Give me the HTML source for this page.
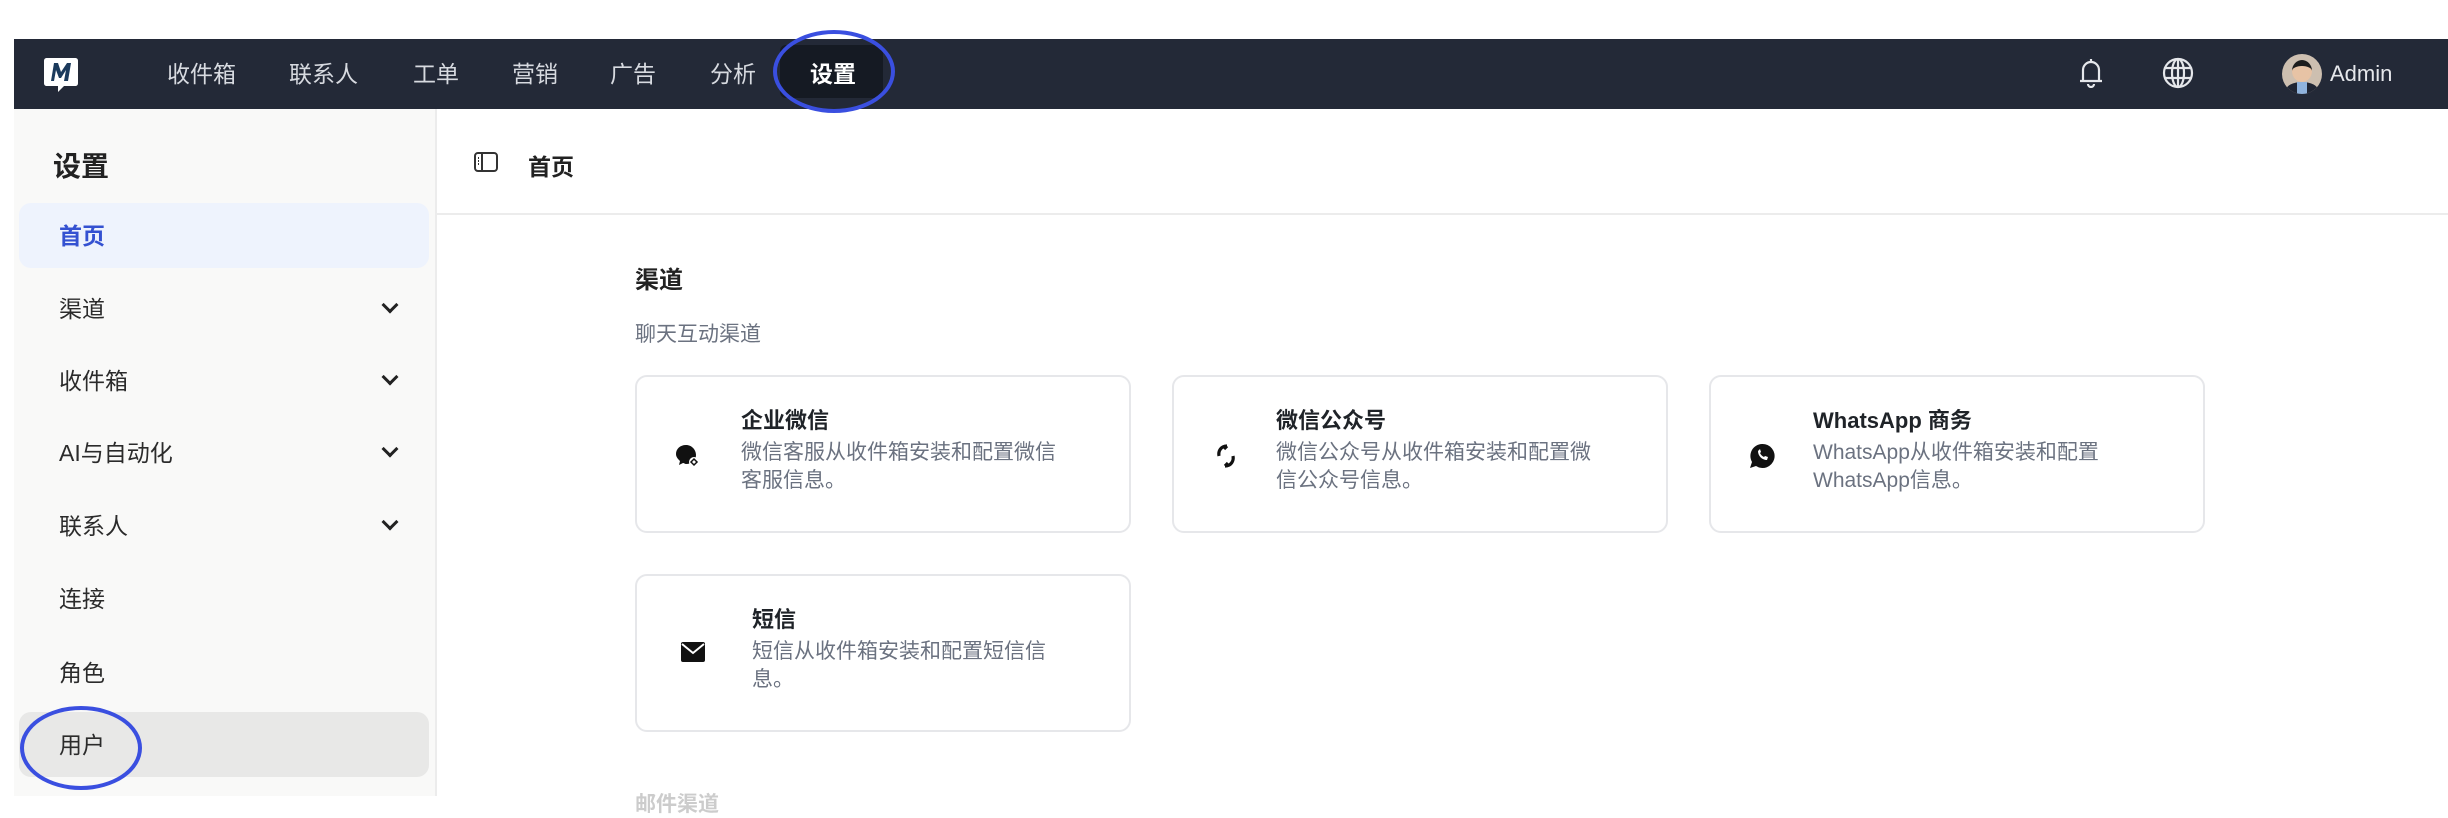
<!DOCTYPE html>
<html><head><meta charset="utf-8"><style>
*{margin:0;padding:0;box-sizing:border-box}
body{width:2448px;height:796px;background:#fff;position:relative;overflow:hidden;font-family:"Liberation Sans","Noto Sans CJK SC",sans-serif;color:#1f2328}
.abs{position:absolute}
.nav{left:14px;top:39px;width:2434px;height:70px;background:#232937}
.nv{position:absolute;top:0;height:70px;line-height:70px;font-size:23px;color:#d7dae0}
.side{left:14px;top:109px;width:423px;height:687px;background:#f9f9f8;border-right:2px solid #ececec}
.mi{position:absolute;left:45px;font-size:23px;color:#2b2b2b;height:30px;line-height:30px}
.chev{position:absolute;left:370px;width:12px;height:12px;border-right:3px solid #222;border-bottom:3px solid #222;transform:rotate(45deg)}
.card{position:absolute;width:496px;height:158px;border:2px solid #e6e7ea;border-radius:12px;background:#fff}
.ct{position:absolute;font-size:22px;font-weight:600;color:#1f2328}
.cd{position:absolute;font-size:21px;line-height:28px;color:#6b7280;width:320px}
</style></head><body>
<div class="abs nav">
  <svg class="abs" style="left:28px;top:16px" width="38" height="38" viewBox="0 0 38 38"><path d="M5 3h28c2 0 3 1 3 3v22c0 2-1 3-3 3H22l-6 6v-6H5c-2 0-3-1-3-3V6c0-2 1-3 3-3z" fill="#fff"/><path d="M9 26l3-18h4l3 9 6-9h4l-3 18h-4l2-11-5 8h-2l-3-8-2 11z" fill="#1b3a5c"/></svg>
  <div class="nv" style="left:153px">收件箱</div>
  <div class="nv" style="left:275px">联系人</div>
  <div class="nv" style="left:399px">工单</div>
  <div class="nv" style="left:498px">营销</div>
  <div class="nv" style="left:596px">广告</div>
  <div class="nv" style="left:696px">分析</div>
  <div class="abs" style="left:766px;top:6px;width:103px;height:53px;background:#151a23;border-radius:6px"></div>
  <div class="nv" style="left:796px;color:#fff;font-weight:bold">设置</div>
  <svg class="abs" style="left:2064px;top:17px" width="26" height="32" viewBox="0 0 26 32" fill="none" stroke="#e5e7eb" stroke-width="2.2"><path d="M13 3v2M5 24V14a8 8 0 0 1 16 0v10M2 25h22M10 28a3 3 0 0 0 6 0"/></svg>
  <svg class="abs" style="left:2148px;top:18px" width="32" height="32" viewBox="0 0 32 32" fill="none" stroke="#e5e7eb" stroke-width="2.2"><circle cx="16" cy="16" r="14"/><ellipse cx="16" cy="16" rx="6" ry="14"/><path d="M3 11h26M3 21h26M16 2v28"/></svg>
  <div class="abs" style="left:2268px;top:15px;width:40px;height:40px;border-radius:50%;background:#cdbfb0;overflow:hidden"><div class="abs" style="left:10px;top:6px;width:20px;height:22px;border-radius:50%;background:#e7c3a5;border-top:6px solid #1c1c1c"></div><div class="abs" style="left:4px;top:28px;width:32px;height:16px;border-radius:50% 50% 0 0;background:#1f2533"></div><div class="abs" style="left:15px;top:28px;width:10px;height:12px;background:#8fb3dd"></div></div>
  <div class="nv" style="left:2316px;color:#e5e7eb;font-size:22px">Admin</div>
</div>
<div class="abs" style="left:773px;top:30px;width:122px;height:83px;border:4px solid #3a4fe0;border-radius:50%"></div>

<div class="abs side">
  <div class="abs" style="left:39px;top:36px;font-size:28px;font-weight:bold;color:#222">设置</div>
  <div class="abs" style="left:5px;top:94px;width:410px;height:65px;background:#eef3fd;border-radius:12px"></div>
  <div class="mi" style="top:112px;color:#3451d1;font-weight:bold">首页</div>
  <div class="mi" style="top:185px">渠道</div><div class="chev" style="top:190px"></div>
  <div class="mi" style="top:257px">收件箱</div><div class="chev" style="top:262px"></div>
  <div class="mi" style="top:329px">AI与自动化</div><div class="chev" style="top:334px"></div>
  <div class="mi" style="top:402px">联系人</div><div class="chev" style="top:407px"></div>
  <div class="mi" style="top:475px">连接</div>
  <div class="mi" style="top:549px">角色</div>
  <div class="abs" style="left:5px;top:603px;width:410px;height:65px;background:#e8e8e7;border-radius:12px"></div>
  <div class="mi" style="top:621px">用户</div>
</div>
<div class="abs" style="left:20px;top:706px;width:122px;height:84px;border:4px solid #3a4fe0;border-radius:50%"></div>

<svg class="abs" style="left:474px;top:152px" width="24" height="20" viewBox="0 0 24 20" fill="none" stroke="#333" stroke-width="2"><rect x="1" y="1" width="22" height="18" rx="3"/><path d="M8 1v18M4 6h1M4 9h1M4 12h1"/></svg>
<div class="abs" style="left:528px;top:148px;font-size:23px;font-weight:bold;color:#222">首页</div>
<div class="abs" style="left:437px;top:213px;width:2011px;height:2px;background:#ececec"></div>

<div class="abs" style="left:635px;top:260px;font-size:24px;font-weight:bold;color:#222">渠道</div>
<div class="abs" style="left:635px;top:318px;font-size:21px;color:#6b7280">聊天互动渠道</div>

<div class="card" style="left:635px;top:375px">
  <svg class="abs" style="left:38px;top:66px" width="26" height="26" viewBox="0 0 26 26"><path d="M11 2C5 2 1 6 1 11c0 3 2 5 4 7l-1 4 4-2c1 0 2 1 3 1 6 0 10-4 10-9S17 2 11 2z" fill="#111"/><circle cx="19" cy="19" r="5" fill="#fff"/><path d="M16 19l3-3 3 3-3 3z" fill="none" stroke="#111" stroke-width="1.5"/></svg>
  <div class="ct" style="left:104px;top:26px">企业微信</div>
  <div class="cd" style="left:104px;top:62px">微信客服从收件箱安装和配置微信客服信息。</div>
</div>
<div class="card" style="left:1172px;top:375px">
  <svg class="abs" style="left:40px;top:66px" width="24" height="26" viewBox="0 0 24 26" fill="none" stroke="#111" stroke-width="3.2"><path d="M13 3C7 3 4 8 5 13M11 23c6 0 9-5 8-10"/><path d="M13 3l-3 3M11 23l3-3"/></svg>
  <div class="ct" style="left:102px;top:26px">微信公众号</div>
  <div class="cd" style="left:102px;top:62px">微信公众号从收件箱安装和配置微信公众号信息。</div>
</div>
<div class="card" style="left:1709px;top:375px">
  <svg class="abs" style="left:38px;top:66px" width="26" height="26" viewBox="0 0 26 26"><path d="M13 1a12 12 0 0 0-10 18l-2 6 6-2A12 12 0 1 0 13 1z" fill="#111"/><path d="M9 8c0 5 4 9 9 9l1-3-3-1-1 1c-2-1-3-2-4-4l1-1-1-3z" fill="#fff"/></svg>
  <div class="ct" style="left:102px;top:26px">WhatsApp 商务</div>
  <div class="cd" style="left:102px;top:62px">WhatsApp从收件箱安装和配置WhatsApp信息。</div>
</div>
<div class="card" style="left:635px;top:574px">
  <svg class="abs" style="left:44px;top:66px" width="24" height="20" viewBox="0 0 24 20"><rect x="0" y="0" width="24" height="20" rx="2" fill="#111"/><path d="M1 2l11 9 11-9" fill="none" stroke="#fff" stroke-width="2"/></svg>
  <div class="ct" style="left:115px;top:26px">短信</div>
  <div class="cd" style="left:115px;top:62px;width:300px">短信从收件箱安装和配置短信信息。</div>
</div>
<div class="abs" style="left:635px;top:788px;font-size:21px;font-weight:bold;color:#ccc">邮件渠道</div>
</body></html>
